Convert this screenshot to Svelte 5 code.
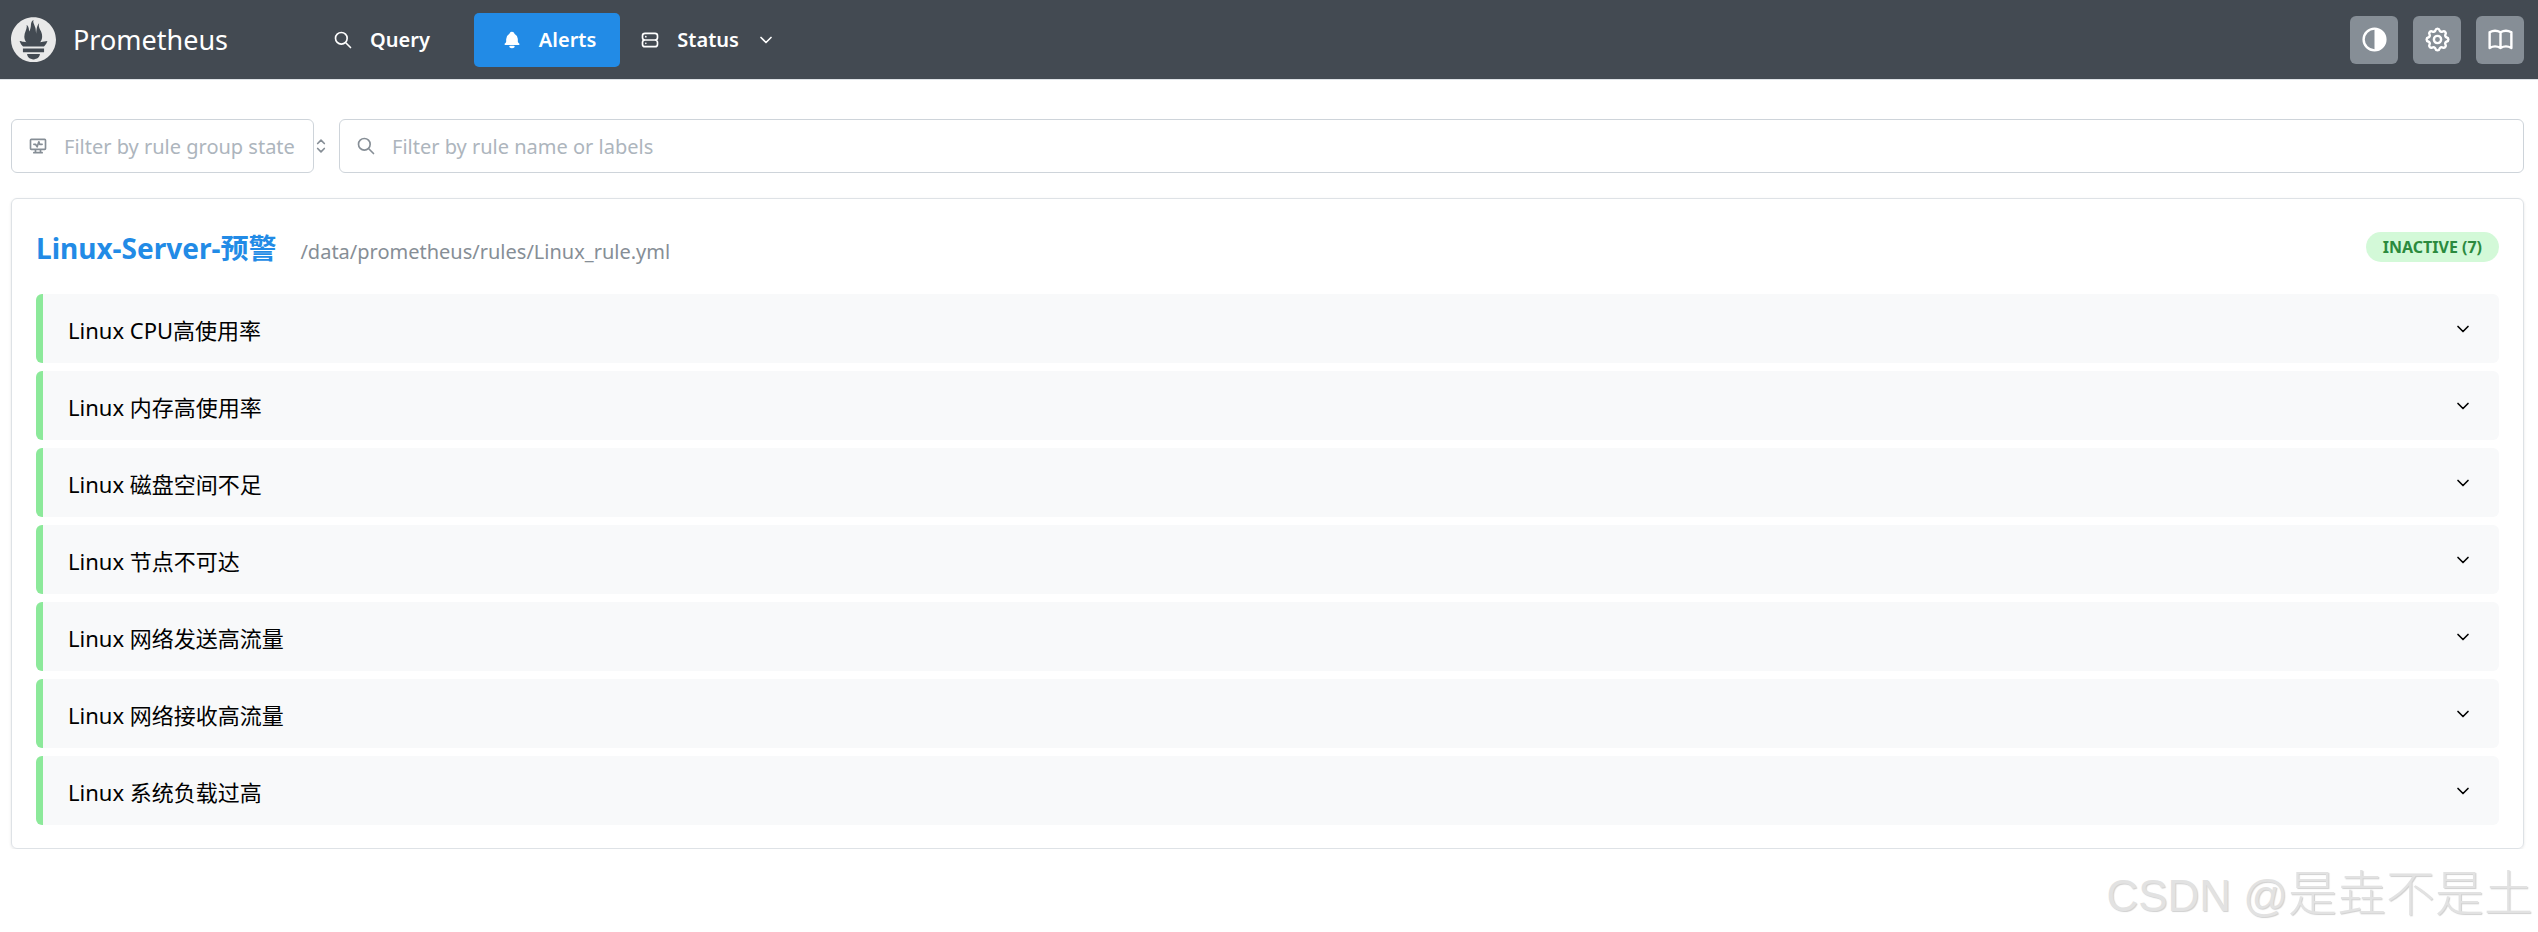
<script>
  const rules = ['Linux CPU高使用率', 'Linux 内存高使用率', 'Linux 磁盘空间不足', 'Linux 节点不可达', 'Linux 网络发送高流量', 'Linux 网络接收高流量', 'Linux 系统负载过高'];
</script>

<header class="bar">
  <div class="brand">
    <svg class="logo" viewBox="0 0 113.333 113.333"><path fill="#e9e9e9" d="M56.667,0.667C25.372,0.667,0,26.036,0,57.332c0,31.295,25.372,56.666,56.667,56.666 c31.295,0,56.666-25.371,56.666-56.666C113.333,26.036,87.961,0.667,56.667,0.667z M56.667,106.722c-8.904,0-16.123-5.948-16.123-13.283H72.79 C72.79,100.773,65.571,106.722,56.667,106.722z M83.297,89.04H30.034v-9.658h53.264V89.04z M83.106,74.411H30.186 c-0.176-0.203-0.356-0.403-0.526-0.609c-5.452-6.62-6.736-10.076-7.983-13.598c-0.021-0.116,6.611,1.355,11.314,2.413 c0,0,2.42,0.56,5.958,1.205c-3.397-3.982-5.414-9.044-5.414-14.218c0-11.359,8.712-21.285,5.569-29.308 c3.059,0.249,6.331,6.456,6.552,16.161c3.252-4.494,4.613-12.701,4.613-17.733c0-5.21,3.433-11.262,6.867-11.469 c-3.061,5.045,0.793,9.37,4.219,20.099c1.285,4.03,1.121,10.812,2.113,15.113C63.797,33.534,65.333,20.5,71,16 c-2.5,5.667,0.37,12.758,2.333,16.167c3.167,5.5,5.087,9.667,5.087,17.548c0,5.284-1.951,10.259-5.242,14.148 c3.742-0.702,6.326-1.335,6.326-1.335l12.152-2.371C91.657,60.156,89.891,67.418,83.106,74.411z"/></svg>
    <span class="name">Prometheus</span>
  </div>
  <nav class="nav">
    <a class="link">
      <svg class="ic" viewBox="0 0 24 24"><path d="M10 10m-7 0a7 7 0 1 0 14 0a7 7 0 1 0 -14 0M21 21l-6 -6"/></svg>
      <span>Query</span>
    </a>
    <a class="link active">
      <svg class="ic" viewBox="0 0 24 24"><path class="solid" d="M14.235 19c.865 0 1.322 1.024 .745 1.668a3.992 3.992 0 0 1 -2.98 1.332a3.992 3.992 0 0 1 -2.98 -1.332c-.552 -.616 -.158 -1.579 .634 -1.661l.11 -.006h4.471z"/><path class="solid" d="M12 2c1.358 0 2.506 .903 2.875 2.141l.046 .171l.008 .043a8.013 8.013 0 0 1 4.024 6.069l.028 .287l.019 .289v2.931l.021 .136a3 3 0 0 0 1.143 1.847l.167 .117l.162 .099c.86 .487 .56 1.766 -.377 1.864l-.116 .006h-16c-1.028 0 -1.387 -1.364 -.493 -1.87a3 3 0 0 0 1.472 -2.063l.021 -.143l.001 -2.97a8 8 0 0 1 3.821 -6.454l.248 -.146l.01 -.043a3.003 3.003 0 0 1 2.562 -2.29l.182 -.017l.176 -.004z"/></svg>
      <span>Alerts</span>
    </a>
    <a class="link">
      <svg class="ic" viewBox="0 0 24 24"><path d="M3 7a3 3 0 0 1 3 -3h12a3 3 0 0 1 3 3v2a3 3 0 0 1 -3 3h-12a3 3 0 0 1 -3 -3zM3 15a3 3 0 0 1 3 -3h12a3 3 0 0 1 3 3v2a3 3 0 0 1 -3 3h-12a3 3 0 0 1 -3 -3zM7 8l0 .01M7 16l0 .01"/></svg>
      <span>Status</span>
      <svg class="ic small" viewBox="0 0 24 24"><path d="M6 9l6 6l6 -6"/></svg>
    </a>
  </nav>
  <div class="tools">
    <button class="tool" aria-label="Theme">
      <svg class="ic big" viewBox="0 0 24 24"><circle cx="12" cy="12" r="9"/><path class="solid" d="M12 3a9 9 0 0 1 0 18z"/></svg>
    </button>
    <button class="tool" aria-label="Settings">
      <svg class="ic big" viewBox="0 0 24 24"><path d="M10.325 4.317c.426 -1.756 2.924 -1.756 3.35 0a1.724 1.724 0 0 0 2.573 1.066c1.543 -.94 3.31 .826 2.37 2.37a1.724 1.724 0 0 0 1.065 2.572c1.756 .426 1.756 2.924 0 3.35a1.724 1.724 0 0 0 -1.066 2.573c.94 1.543 -.826 3.31 -2.37 2.37a1.724 1.724 0 0 0 -2.572 1.065c-.426 1.756 -2.924 1.756 -3.35 0a1.724 1.724 0 0 0 -2.573 -1.066c-1.543 .94 -3.31 -.826 -2.37 -2.37a1.724 1.724 0 0 0 -1.065 -2.572c-1.756 -.426 -1.756 -2.924 0 -3.35a1.724 1.724 0 0 0 1.066 -2.573c-.94 -1.543 .826 -3.31 2.37 -2.37c1 .608 2.296 .07 2.572 -1.065zM9 12a3 3 0 1 0 6 0a3 3 0 0 0 -6 0"/></svg>
    </button>
    <button class="tool" aria-label="Docs">
      <svg class="ic big" viewBox="0 0 24 24"><path d="M3 19a9 9 0 0 1 9 0a9 9 0 0 1 9 0M3 6a9 9 0 0 1 9 0a9 9 0 0 1 9 0M3 6l0 13M12 6l0 13M21 6l0 13"/></svg>
    </button>
  </div>
</header>

<main class="page">
  <div class="filters">
    <div class="field select">
      <svg class="ic gray" viewBox="0 0 24 24"><path d="M3 5a1 1 0 0 1 1 -1h16a1 1 0 0 1 1 1v10a1 1 0 0 1 -1 1h-16a1 1 0 0 1 -1 -1zM7 20h10M9 16v4M15 16v4M7 10h2l2 3l2 -6l1 3h3"/></svg>
      <span class="ph">Filter by rule group state</span>
      <svg class="ic gray sel" viewBox="0 0 24 24"><path d="M8 9l4 -4l4 4M16 15l-4 4l-4 -4"/></svg>
    </div>
    <div class="field search">
      <svg class="ic gray" viewBox="0 0 24 24"><path d="M10 10m-7 0a7 7 0 1 0 14 0a7 7 0 1 0 -14 0M21 21l-6 -6"/></svg>
      <span class="ph">Filter by rule name or labels</span>
    </div>
  </div>

  <section class="card">
    <div class="head">
      <div class="title">
        <span class="group">Linux-Server-预警</span>
        <span class="path">/data/prometheus/rules/Linux_rule.yml</span>
      </div>
      <span class="badge">INACTIVE (7)</span>
    </div>
    <ul class="rows">
      {#each rules as r}
        <li class="row">
          <span class="label">{r}</span>
          <svg class="ic chev" viewBox="0 0 24 24"><path d="M6 9l6 6l6 -6"/></svg>
        </li>
      {/each}
    </ul>
  </section>
</main>

<div class="mark"><span class="latin">CSDN @</span><span class="cjk">是垚不是土</span></div>

<style>
  :global(body) {
    margin: 0;
    background: #fff;
    font-family: "Noto Sans", "Noto Sans CJK SC", sans-serif;
  }
  .ic {
    width: 20px;
    height: 20px;
    fill: none;
    stroke: currentColor;
    stroke-width: 2;
    stroke-linecap: round;
    stroke-linejoin: round;
    flex: none;
  }
  .solid { fill: currentColor; stroke: none; }
  .bar {
    box-sizing: border-box;
    height: 80px;
    background: #434a52;
    border-bottom: 1px solid #dee2e6;
    display: flex;
    align-items: center;
    padding: 0 14px 0 11px;
    color: #fff;
  }
  .brand { display: flex; align-items: center; gap: 17px; width: 322px; }
  .logo { width: 45px; height: 45px; }
  .name { font-size: 27px; line-height: 1; }
  .nav { display: flex; gap: 20px; }
  .link {
    display: flex;
    align-items: center;
    height: 54px;
    padding: 0 24px 0 0;
    gap: 17px;
    font-size: 20px;
    font-weight: 600;
    border-radius: 5px;
  }
  .link.active { background: #228be6; padding: 0 24px 0 28px; }
  .tools { margin-left: auto; display: flex; gap: 15px; }
  .tool {
    width: 48px;
    height: 48px;
    border: 0;
    border-radius: 6px;
    background: #868e96;
    color: #fff;
    display: flex;
    align-items: center;
    justify-content: center;
    padding: 0;
  }
  .big { width: 29px; height: 29px; }
  .small { width: 20px; height: 20px; }
  .page { padding: 39px 14px 0 11px; }
  .filters { display: flex; gap: 25px; }
  .field {
    box-sizing: border-box;
    height: 54px;
    border: 1.5px solid #ced4da;
    border-radius: 6px;
    display: flex;
    align-items: center;
    gap: 16px;
    padding: 0 16px;
  }
  .select { width: 303px; }
  .sel { margin-left: auto; }
  .search { flex: 1; }
  .gray { color: #868e96; }
  .ph { font-size: 20px; color: #adb5bd; white-space: nowrap; }
  .card {
    box-sizing: border-box;
    margin-top: 25px;
    height: 651px;
    border: 1.5px solid #dee2e6;
    border-radius: 6px;
    box-shadow: 0 1px 3px rgba(0,0,0,.1);
    padding: 0 24px;
  }
  .head {
    display: flex;
    align-items: center;
    justify-content: space-between;
    height: 95px;
  }
  .title { display: flex; align-items: baseline; gap: 24px; }
  .group { font-size: 28px; font-weight: 700; color: #228be6; }
  .path { font-size: 20px; color: #868e96; }
  .badge {
    box-sizing: border-box;
    height: 30px;
    padding: 0 17px;
    display: flex;
    align-items: center;
    border-radius: 15px;
    background: #d3f9d8;
    color: #2b8a3e;
    font-size: 16px;
    font-weight: 700;
  }
  .rows { list-style: none; margin: 0; padding: 0; display: flex; flex-direction: column; gap: 8px; }
  .row {
    box-sizing: border-box;
    height: 69px;
    display: flex;
    align-items: center;
    justify-content: space-between;
    background: #f8f9fa;
    border-left: 7px solid #8ce99a;
    border-radius: 6px;
    padding: 0 26px 0 25px;
  }
  .label { font-size: 22px; color: #000; }
  .chev { color: #000; }
  .mark {
    position: absolute;
    right: 5px;
    top: 860px;
    color: #e2e2e2;
    text-shadow: 1px 1px 1px #d0d0d0;
    white-space: nowrap;
    line-height: 60px;
  }
  .latin { font-family: "Liberation Sans", sans-serif; font-size: 44px; }
  .cjk { font-family: "Noto Sans CJK SC", sans-serif; font-size: 49px; font-weight: 300; }
</style>
